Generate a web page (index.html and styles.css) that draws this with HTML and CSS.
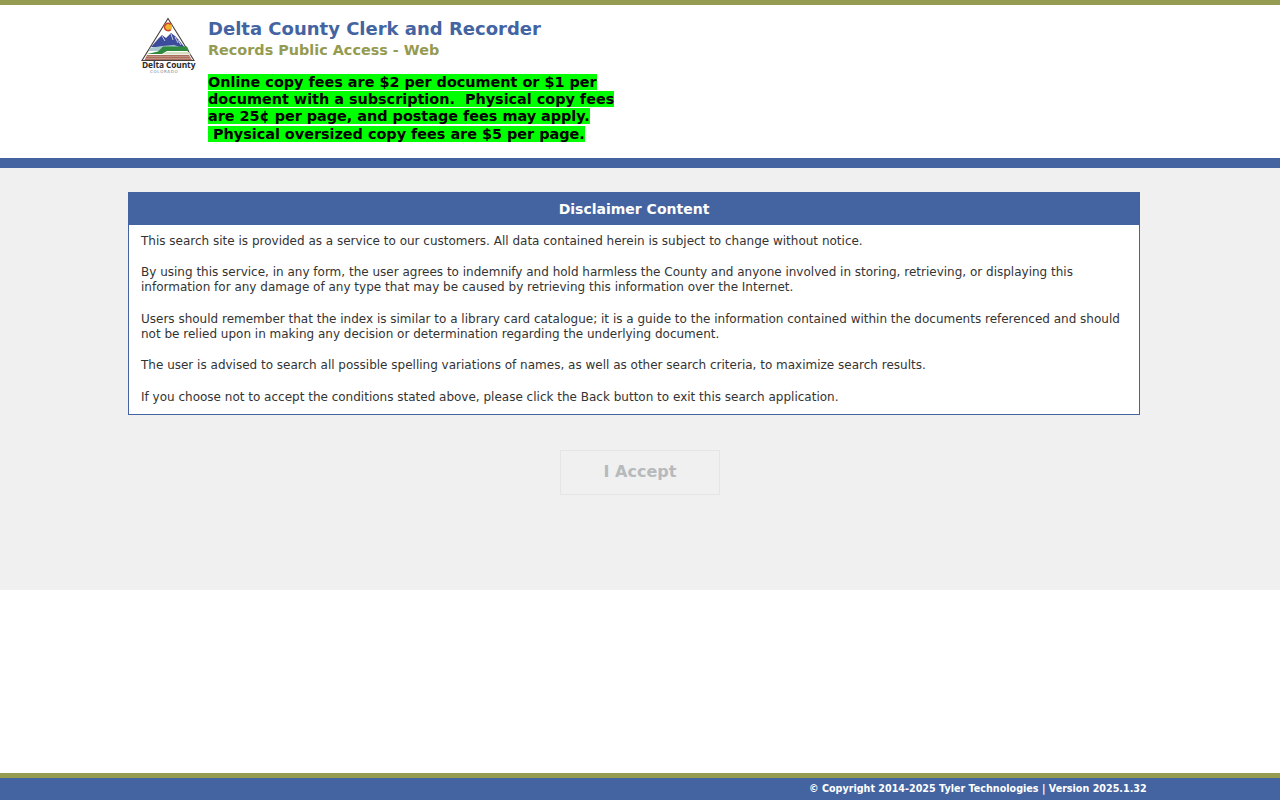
FILE: index.html
```html
<!DOCTYPE html>
<html lang="en">
<head>
<meta charset="utf-8">
<title>Delta County Clerk and Recorder</title>
<link rel="stylesheet" href="styles.css">
</head>
<body>
<div class="page">
  <header class="header">
    <div class="logo">
      <svg width="56" height="46" viewBox="0 0 56 46" aria-hidden="true">
        <polygon points="28,2.5 54,44.5 2,44.5" fill="#fff" stroke="#4a3f3a" stroke-width="1.1"/>
        <polygon points="11,31 18,23 22,19 26,22 31,17 35,20 38,23 45,32 30,33" fill="#3d4b9c"/>
        <path d="M22 20 L25 25 M31 18 L33 24 M35 21 L38 27 M38 24 L41 29" stroke="#cfd6ea" stroke-width="0.9" fill="none"/>
        <circle cx="28" cy="11" r="4" fill="#f0b62e"/>
        <path d="M30.6 8.4 A3.6 3.6 0 1 0 30.6 13.6" fill="none" stroke="#c8442e" stroke-width="1.6"/>
        <polygon points="10,32 22,30 34,29 46,33 47,35 9,35" fill="#a9c9cf"/>
        <path d="M7 38 L18 35.5 L23 30.5 L47 30.5 L49 35 L27 35 L22 38 Z" fill="#2f8a3f"/>
        <polygon points="6,38.5 22,38.5 27,36 49,36 51,38.5" fill="#d8dfc2"/>
        <polygon points="4.5,44 7,39 49,39 52,44" fill="#ab6f60"/>
        <path d="M6 40.5 H50 M5 42.5 H51" stroke="#d9b3a2" stroke-width="0.5"/>
      </svg>
      <span class="logo-name">Delta County</span>
      <span class="logo-state">COLORADO</span>
    </div>
    <div class="titles">
      <h1 class="title">Delta County Clerk and Recorder</h1>
      <div class="subtitle">Records Public Access - Web</div>
      <p class="notice"><mark class="notice-mark">Online copy fees are $2 per document or $1 per document with a subscription.&nbsp; Physical copy fees are 25¢ per page, and postage fees may apply. &nbsp;Physical oversized copy fees are $5 per page.</mark></p>
    </div>
  </header>
  <main class="main">
    <section class="panel">
      <h2 class="panel-head">Disclaimer Content</h2>
      <div class="panel-body">
        <p>This search site is provided as a service to our customers. All data contained herein is subject to change without notice.</p>
        <p>By using this service, in any form, the user agrees to indemnify and hold harmless the County and anyone involved in storing, retrieving, or displaying this information for any damage of any type that may be caused by retrieving this information over the Internet.</p>
        <p>Users should remember that the index is similar to a library card catalogue; it is a guide to the information contained within the documents referenced and should not be relied upon in making any decision or determination regarding the underlying document.</p>
        <p>The user is advised to search all possible spelling variations of names, as well as other search criteria, to maximize search results.</p>
        <p>If you choose not to accept the conditions stated above, please click the Back button to exit this search application.</p>
      </div>
    </section>
    <div class="actions"><button class="accept" type="button" disabled>I Accept</button></div>
  </main>
  <footer class="footer">
    <span class="copyright">© Copyright 2014-2025 Tyler Technologies | Version 2025.1.32</span>
  </footer>
</div>
</body>
</html>
```
FILE: styles.css
```css
* { box-sizing: border-box; }
html, body { margin: 0; height: 100%; }
body { font-family: "DejaVu Sans", sans-serif; background: #fff; color: #333; }
.page { height: 800px; display: flex; flex-direction: column; overflow: hidden; }
.header {
  height: 168px;
  border-top: 5px solid #959b50;
  border-bottom: 10px solid #4464a1;
  background: #fff;
  padding: 11px 0 0 140px;
  display: flex;
}
.logo { width: 68px; display: flex; flex-direction: column; }
.logo svg { display: block; }
.logo-name { font-family: "Open Sans", sans-serif; font-size: 8.4px; font-weight: 700; color: #2b2b2b; line-height: 8px; padding-left: 2px; margin-top: -1px; white-space: nowrap; letter-spacing: -0.1px; }
.logo-state { font-size: 4px; line-height: 5px; color: #7a8290; padding-left: 10px; letter-spacing: 0.7px; }
.titles { width: 412px; }
.title { margin: 0; font-size: 18px; line-height: 25px; font-weight: 700; color: #4464a1; }
.subtitle { font-size: 14.4px; line-height: 18px; font-weight: 700; color: #959b50; white-space: nowrap; }
.notice { margin: 14.7px 0 0; font-size: 14.4px; line-height: 17.3px; font-weight: 700; color: #000; }
.notice-mark { background: #00ff00; color: #000; }
.main { height: 422px; background: #f0f0f0; padding-top: 24px; }
.panel { width: 1012px; margin-left: 128px; background: #fff; border: 1px solid #4464a1; }
.panel-head { margin: 0; height: 32px; background: #4464a1; color: #fff; font-size: 14px; line-height: 33px; font-weight: 700; text-align: center; }
.panel-body { padding: 9px 12px 9px; font-size: 12px; line-height: 15px; color: #333; }
.panel-body p { margin: 0 0 16.4px; }
.panel-body p:last-child { margin-bottom: 0; }
.actions { display: flex; justify-content: center; margin-top: 35px; }
.accept { width: 160px; height: 45px; background: #f0f0f0; border: 1px solid #e5e5e5; font-family: inherit; font-size: 16px; font-weight: 700; color: #b6babc; padding: 0 0 2px; }
.footer { margin-top: auto; height: 27px; border-top: 5px solid #959b50; background: #4464a1; padding-left: 809px; color: #fff; font-size: 9.6px; line-height: 21px; font-weight: 700; }
```
